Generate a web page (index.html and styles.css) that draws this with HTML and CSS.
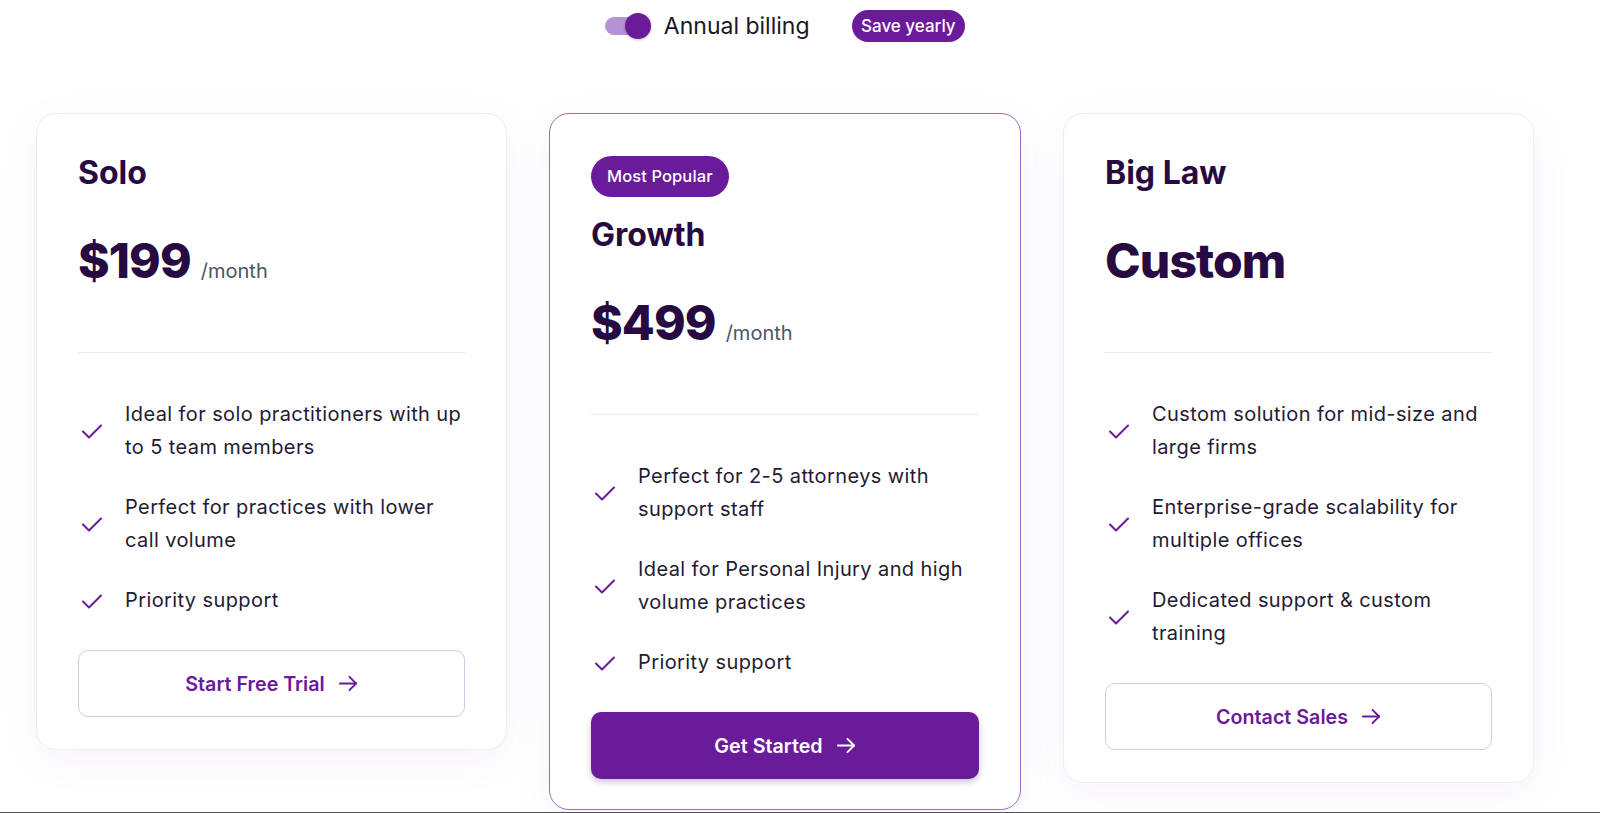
FILE: index.html
```html
<!DOCTYPE html>
<html lang="en">
<head>
<meta charset="utf-8">
<title>Pricing</title>
<link rel="stylesheet" href="styles.css">
</head>
<body>
<main class="page">
  <div class="container">
    <div class="billing">
      <span class="toggle"><span class="track"></span><span class="knob"></span></span>
      <span class="billing-label">Annual billing</span>
      <span class="save-pill">Save yearly</span>
    </div>

    <div class="cards">
      <section class="card">
        <h3 class="plan-name">Solo</h3>
        <div class="price-row"><span class="price">$199</span><span class="per">/month</span></div>
        <hr class="divider">
        <ul class="features">
          <li><svg class="check" viewBox="0 0 24 24"><polyline points="5 12.5 11 18.5 23 6.5"/></svg><span>Ideal for solo practitioners with up to 5 team members</span></li>
          <li><svg class="check" viewBox="0 0 24 24"><polyline points="5 12.5 11 18.5 23 6.5"/></svg><span>Perfect for practices with lower call volume</span></li>
          <li><svg class="check" viewBox="0 0 24 24"><polyline points="5 12.5 11 18.5 23 6.5"/></svg><span>Priority support</span></li>
        </ul>
        <a class="btn btn-outline">Start Free Trial<svg class="arrow" viewBox="0 0 20 20"><line x1="1" y1="10" x2="18" y2="10"/><polyline points="11 3 18 10 11 17"/></svg></a>
      </section>

      <section class="card card-featured">
        <div class="badge-wrap"><span class="badge">Most Popular</span></div>
        <h3 class="plan-name">Growth</h3>
        <div class="price-row"><span class="price">$499</span><span class="per">/month</span></div>
        <hr class="divider">
        <ul class="features">
          <li><svg class="check" viewBox="0 0 24 24"><polyline points="5 12.5 11 18.5 23 6.5"/></svg><span>Perfect for 2-5 attorneys with support staff</span></li>
          <li><svg class="check" viewBox="0 0 24 24"><polyline points="5 12.5 11 18.5 23 6.5"/></svg><span>Ideal for Personal Injury and high volume practices</span></li>
          <li><svg class="check" viewBox="0 0 24 24"><polyline points="5 12.5 11 18.5 23 6.5"/></svg><span>Priority support</span></li>
        </ul>
        <a class="btn btn-solid">Get Started<svg class="arrow" viewBox="0 0 20 20"><line x1="1" y1="10" x2="18" y2="10"/><polyline points="11 3 18 10 11 17"/></svg></a>
      </section>

      <section class="card">
        <h3 class="plan-name">Big Law</h3>
        <div class="price-row"><span class="price">Custom</span></div>
        <hr class="divider">
        <ul class="features">
          <li><svg class="check" viewBox="0 0 24 24"><polyline points="5 12.5 11 18.5 23 6.5"/></svg><span>Custom solution for mid-size and large firms</span></li>
          <li><svg class="check" viewBox="0 0 24 24"><polyline points="5 12.5 11 18.5 23 6.5"/></svg><span>Enterprise-grade scalability for multiple offices</span></li>
          <li><svg class="check" viewBox="0 0 24 24"><polyline points="5 12.5 11 18.5 23 6.5"/></svg><span>Dedicated support &amp; custom training</span></li>
        </ul>
        <a class="btn btn-outline">Contact Sales<svg class="arrow" viewBox="0 0 20 20"><line x1="1" y1="10" x2="18" y2="10"/><polyline points="11 3 18 10 11 17"/></svg></a>
      </section>
    </div>
  </div>
</main>
<div class="next-section"></div>
</body>
</html>
```

FILE: styles.css
```css
* { box-sizing: border-box; }

html, body {
  margin: 0;
  padding: 0;
  background: #ffffff;
}

body {
  font-family: Inter, "Noto Sans", "DejaVu Sans", sans-serif;
  color: #241a33;
}

.page {
  height: 812px;
  overflow: hidden;
}

.container {
  width: 1498px;
  margin-left: 36px;
  padding-top: 10px;
}

/* Billing toggle row */
.billing {
  display: flex;
  justify-content: center;
  align-items: center;
  height: 32px;
}

.toggle {
  position: relative;
  width: 46px;
  height: 26px;
  display: inline-block;
}

.track {
  position: absolute;
  left: 0;
  top: 4px;
  width: 42px;
  height: 18px;
  border-radius: 9px;
  background: #b592d3;
}

.knob {
  position: absolute;
  right: 0;
  top: 0;
  width: 26px;
  height: 26px;
  border-radius: 50%;
  background: #6a1b9a;
  box-shadow: 0 1px 3px rgba(0, 0, 0, 0.25);
}

.billing-label {
  margin-left: 13px;
  font-size: 23px;
  color: #1b1626;
  line-height: 32px;
}

.save-pill {
  margin-left: 42px;
  height: 32px;
  padding: 0 9.5px;
  border-radius: 16px;
  background: #6a1b9a;
  color: #ffffff;
  font-size: 17px;
  font-weight: 500;
  line-height: 32px;
}

/* Cards */
.cards {
  margin-top: 71px;
  display: flex;
  align-items: flex-start;
  gap: 42px;
}

.card {
  width: 471px;
  flex: 0 0 471px;
  background: #ffffff;
  border: 1px solid #f1eaf7;
  border-radius: 20px;
  padding: 41px 41px 32px;
  box-shadow: 0 10px 40px rgba(106, 27, 154, 0.06);
}

.card-featured {
  width: 472px;
  flex-basis: 472px;
  border-color: #9a6cc0;
  padding-bottom: 30px;
}

.badge-wrap {
  height: 41px;
  margin-top: 1px;
  margin-bottom: 20px;
}

.badge {
  display: inline-block;
  height: 41px;
  line-height: 41px;
  padding: 0 16px;
  border-radius: 21px;
  background: #6a1b9a;
  color: #ffffff;
  font-size: 16.5px;
  font-weight: 500;
  letter-spacing: 0.1px;
}

.plan-name {
  margin: 0;
  font-size: 32px;
  line-height: 36px;
  font-weight: 700;
  color: #270a42;
}

.price-row {
  margin-top: 46px;
  display: flex;
  align-items: baseline;
  height: 48px;
}

.price {
  font-size: 48px;
  line-height: 48px;
  font-weight: 800;
  color: #270a42;
  letter-spacing: -0.9px;
}

.per {
  margin-left: 10px;
  font-size: 20px;
  color: #4b5563;
}

.divider {
  margin: 67px 0 0;
  border: 0;
  height: 1px;
  background: #ebe9ef;
}

.features {
  list-style: none;
  margin: 45px 0 0;
  padding: 0;
  display: flex;
  flex-direction: column;
  gap: 27px;
}

.features li {
  display: flex;
  align-items: center;
  gap: 23px;
  font-size: 20px;
  line-height: 33px;
  letter-spacing: 0.4px;
  color: #241a33;
}

.check {
  flex: 0 0 24px;
  width: 24px;
  height: 24px;
  fill: none;
  stroke: #6a1b9a;
  stroke-width: 2;
  stroke-linecap: round;
  stroke-linejoin: round;
}

.btn {
  margin-top: 33px;
  height: 67px;
  border-radius: 10px;
  display: flex;
  align-items: center;
  justify-content: center;
  gap: 14px;
  font-size: 19.7px;
  font-weight: 600;
  text-decoration: none;
  cursor: pointer;
}

.btn-outline {
  border: 1px solid #d8c5e8;
  color: #6a1b9a;
  background: #ffffff;
}

.btn-solid {
  background: #6a1b9a;
  color: #ffffff;
  box-shadow: 0 3px 6px rgba(60, 10, 90, 0.25);
}

.arrow {
  width: 19px;
  height: 19px;
  fill: none;
  stroke: currentColor;
  stroke-width: 2;
  stroke-linecap: round;
  stroke-linejoin: round;
}

.next-section {
  height: 1px;
  background: #555555;
}
```
